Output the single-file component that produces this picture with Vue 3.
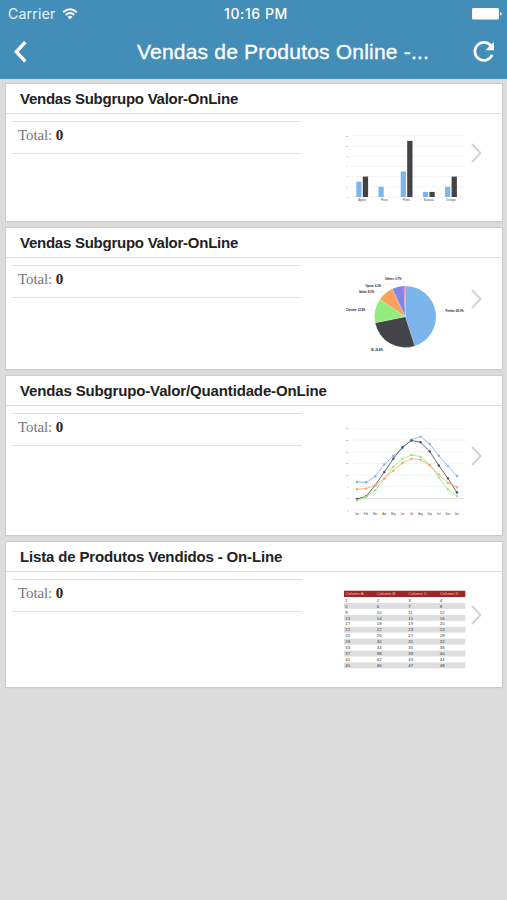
<script setup>
const cards = [
  { title: 'Vendas Subgrupo Valor-OnLine', kind: 'bars', top: 114, height: 107 },
  { title: 'Vendas Subgrupo Valor-OnLine', kind: 'pie', top: 258, height: 111 },
  { title: 'Vendas Subgrupo-Valor/Quantidade-OnLine', kind: 'lines', top: 406, height: 129, wide: true },
  { title: 'Lista de Produtos Vendidos - On-Line', kind: 'table', top: 572, height: 115, wide: true },
]

const barGroups = [
  { label: 'Apples', blue: 3, dark: 4 },
  { label: 'Pears', blue: 2, dark: 0 },
  { label: 'Plums', blue: 5, dark: 11 },
  { label: 'Bananas', blue: 1, dark: 1 },
  { label: 'Oranges', blue: 2, dark: 4 },
].map((g, i) => ({ ...g, x: 356.3 + i * 22.2 }))

const cx = 405.3
const cy = 316.7
const r = 30.8
let angle = 0
const slices = [
  [45, '#7cb5ec'],
  [26.8, '#434348'],
  [12.8, '#90ed7d'],
  [8.5, '#f7a35c'],
  [6.2, '#8085e9'],
  [0.7, '#f15c80'],
].map(([share, color]) => {
  const a = angle
  angle += (share / 100) * Math.PI * 2
  const p = (t) => `${cx + r * Math.sin(t)} ${cy - r * Math.cos(t)}`
  return { color, d: `M${cx} ${cy}L${p(a)}A${r} ${r} 0 0 1 ${p(angle)}Z` }
})
const pieLabels = [
  { text: 'Others: 0.7%', x: 385, y: 280.3, leader: 'M402 279.5Q404 280 405 286' },
  { text: 'Opera: 6.2%', x: 365.5, y: 286.5, leader: 'M383 285.5Q394 282 399 286.5' },
  { text: 'Safari: 8.5%', x: 359, y: 292.7, leader: 'M376 292Q384 291 386.5 293' },
  { text: 'Chrome: 12.8%', x: 346, y: 310.5, leader: 'M367 309.5L375 310' },
  { text: 'IE: 26.8%', x: 371, y: 350.6, leader: 'M385 349.5Q389 346 390 343' },
  { text: 'Firefox: 45.0%', x: 445.5, y: 312.3, leader: 'M444 311.5L436 312' },
]

const months = ['Jan', 'Feb', 'Mar', 'Apr', 'May', 'Jun', 'Jul', 'Aug', 'Sep', 'Oct', 'Nov', 'Dec']
const px = (i) => 357 + i * 9.09
const py = (v) => 498.4 - v * 2.333
const series = [
  { color: '#7cb5ec', data: [7, 6.9, 9.5, 14.5, 18.2, 21.5, 25.2, 26.5, 23.3, 18.3, 13.9, 9.6] },
  { color: '#505055', data: [-0.2, 0.8, 5.7, 11.3, 17, 22, 24.8, 24.1, 20.1, 14.1, 8.6, 2.5] },
  { color: '#90ed7d', data: [-0.9, 0.6, 3.5, 8.4, 13.5, 17, 18.6, 17.9, 14.3, 9, 3.9, 1] },
  { color: '#f7a872', data: [3.9, 4.2, 5.7, 8.5, 11.9, 15.2, 17, 16.6, 14.2, 10.3, 6.6, 4.8] },
].map((s) => ({ ...s, points: s.data.map((v, i) => `${px(i)},${py(v)}`).join(' ') }))
const columns = ['A', 'B', 'C', 'D']
</script>

<template>
  <div class="screen">
    <header class="top">
      <div class="status">
        <div class="carrier">
          <span>Carrier</span>
          <svg width="16" height="12" viewBox="0 0 16 12" fill="none" stroke="#fff" stroke-width="1.9">
            <path d="M1.2 4.3Q8-1.8 14.8 4.3M3.7 7Q8 3.2 12.3 7" />
            <path d="M5.5 8.8Q8 6.9 10.5 8.8L8 11.5Z" fill="#fff" stroke="none" />
          </svg>
        </div>
        <span class="clock">10:16 PM</span>
        <svg class="battery" width="30" height="12" viewBox="0 0 30 12" fill="#fff">
          <rect x="0" y="0" width="27" height="11.5" rx="1.5" />
          <path d="M28 4Q29.8 4.5 29.8 5.8T28 7.6Z" />
        </svg>
      </div>
      <nav class="bar">
        <svg width="14" height="24" viewBox="0 0 14 24" fill="none" stroke="#fff" stroke-width="3.4">
          <path d="M12.300 2.200L3.300 11.800L12.300 21.400" />
        </svg>
        <h1>Vendas de Produtos Online -...</h1>
        <svg width="22" height="22" viewBox="0 0 22 22">
          <path d="M18.3 5.3A9 9 0 1 0 19.2 13.8" fill="none" stroke="#fff" stroke-width="2.7" />
          <path d="M21 0.8V9.3H12.3Z" fill="#fff" />
        </svg>
      </nav>
    </header>

    <main class="cards">
      <section v-for="card in cards" :key="card.top" class="card">
        <h2 :class="{ wide: card.wide }">{{ card.title }}</h2>
        <div class="body" :style="{ height: card.height + 'px' }">
          <div class="total">Total: <b>0</b></div>
          <svg class="thumb" width="128" :height="card.height" :viewBox="`340 ${card.top} 128 ${card.height}`">
            <g v-if="card.kind === 'bars'">
              <g v-for="n in 7" :key="n">
                <path :d="`M351 ${207.2 - n * 10.2}H464`" stroke="#ececec" stroke-width="0.6" />
                <text x="348" :y="208 - n * 10.2" text-anchor="end" class="axis">{{ (n - 1) * 2 }}</text>
              </g>
              <g v-for="g in barGroups" :key="g.label">
                <rect :x="g.x" :y="197 - g.blue * 5.1" width="5.2" :height="g.blue * 5.1" fill="#7cb5ec" />
                <rect :x="g.x + 6.5" :y="197 - g.dark * 5.1" width="5.3" :height="g.dark * 5.1" fill="#434348" />
                <text :x="g.x + 6" y="201.3" text-anchor="middle" class="label">{{ g.label }}</text>
              </g>
            </g>
            <g v-else-if="card.kind === 'pie'">
              <path v-for="s in slices" :key="s.color" :d="s.d" :fill="s.color" stroke="#fff" stroke-width="0.2" />
              <g v-for="l in pieLabels" :key="l.text">
                <path :d="l.leader" fill="none" stroke="#ddd" stroke-width="0.4" />
                <text :x="l.x" :y="l.y" class="pie-label">{{ l.text }}</text>
              </g>
            </g>
            <g v-else-if="card.kind === 'lines'">
              <g v-for="n in 8" :key="n">
                <path :d="`M353 ${521.73 - n * 11.665}H464`" :stroke="n === 2 ? '#d4d4d4' : '#ececec'" stroke-width="0.7" />
                <text x="348.5" :y="522.6 - n * 11.665" text-anchor="end" class="axis">{{ n * 5 - 10 }}</text>
              </g>
              <g v-for="s in series" :key="s.color">
                <polyline :points="s.points" fill="none" :stroke="s.color" stroke-width="0.85" />
                <circle v-for="(v, i) in s.data" :key="i" :cx="px(i)" :cy="py(v)" r="1.2" :fill="s.color" />
              </g>
              <text v-for="(m, i) in months" :key="m" :x="px(i)" y="515" text-anchor="middle" class="label">{{ m }}</text>
            </g>
            <g v-else>
              <rect x="344" y="590.7" width="121.3" height="6.3" fill="#9f2525" />
              <text v-for="(c, i) in columns" :key="c" :x="345.5 + i * 31.5" y="595.4" class="head">Column {{ c }}</text>
              <g v-for="n in 12" :key="n">
                <rect v-if="n % 2 === 0" x="344" :y="591.05 + n * 5.95" width="121.3" height="5.95" fill="#dedede" />
                <text v-for="c in 4" :key="c" :x="313.8 + c * 31.5" :y="595.7 + n * 5.95" class="cell">{{ (n - 1) * 4 + c }}</text>
              </g>
            </g>
          </svg>
          <svg class="chevron" width="14" height="22" viewBox="0 0 14 22" fill="none" stroke="#d4d4d4" stroke-width="2">
            <path d="M2 2L10.5 11L2 20" />
          </svg>
        </div>
      </section>
    </main>
  </div>
</template>

<style>
body {
  margin: 0;
  background: #dcdcdc;
}
</style>

<style scoped>
.screen {
  min-height: 900px;
  background: #dcdcdc;
  font-family: 'Liberation Sans', Arial, sans-serif;
}
svg {
  display: block;
  flex: none;
}
.top {
  height: 79px;
  background: #438eb9;
  color: #fff;
}
.status {
  display: grid;
  grid-template-columns: 1fr auto 1fr;
  align-items: center;
  height: 27px;
  padding: 0 5px 0 8px;
  font-family: Inter, sans-serif;
  font-size: 14px;
}
.carrier {
  display: flex;
  align-items: center;
  gap: 6px;
  color: #e7f4fd;
  letter-spacing: 0.25px;
}
.clock {
  padding-left: 2px;
  font-weight: 500;
  letter-spacing: 0.6px;
}
.battery {
  justify-self: end;
}
.bar {
  display: flex;
  align-items: center;
  height: 50px;
  padding: 0 12px 2px 13px;
}
h1 {
  flex: 1;
  margin: 0 0 0 110px;
  font-size: 21px;
  font-weight: 400;
  line-height: 28px;
  letter-spacing: 0.2px;
  white-space: nowrap;
  -webkit-text-stroke: 0.35px #fff;
}
.cards {
  display: flex;
  flex-direction: column;
  gap: 7px;
  padding: 5px 5px 0 6px;
}
.card {
  background: #fff;
  box-shadow: 0 0 0 1px #cbcbcb, 0 1px 1px #bdbdbd;
}
h2 {
  box-sizing: border-box;
  height: 30px;
  margin: 0;
  padding-left: 14px;
  border-bottom: 1px solid #dedede;
  color: #222;
  font-size: 15px;
  font-weight: 700;
  line-height: 30px;
  letter-spacing: -0.25px;
  white-space: nowrap;
}
h2.wide {
  letter-spacing: -0.15px;
}
.body {
  display: flex;
  padding-left: 6px;
}
.total {
  box-sizing: border-box;
  width: 290px;
  height: 33px;
  margin-top: 7px;
  padding-left: 6px;
  border-top: 1px solid #dedede;
  border-bottom: 1px solid #e2e2e2;
  color: #777;
  font-family: 'Liberation Serif', serif;
  font-size: 15px;
  line-height: 26px;
  letter-spacing: -0.12px;
}
.total b {
  color: #222;
}
.thumb {
  margin-left: 38px;
}
.chevron {
  align-self: center;
  margin: -29px 0 0 2px;
}
.axis {
  fill: #777;
  font-size: 2.3px;
}
.label {
  fill: #444;
  font-size: 2.6px;
}
.pie-label {
  fill: #111;
  font-size: 2.7px;
  font-weight: 700;
}
.head {
  fill: #e9c4c4;
  font-size: 4.2px;
}
.cell {
  fill: #333;
  font-size: 4.3px;
}
</style>
